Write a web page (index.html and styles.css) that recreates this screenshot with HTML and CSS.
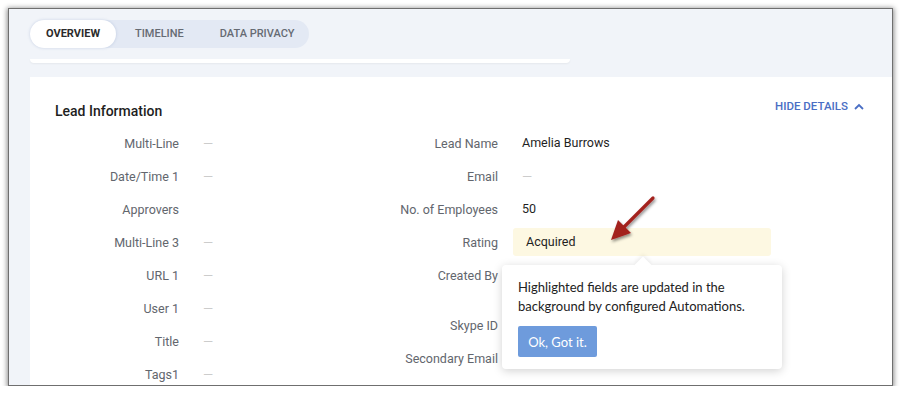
FILE: index.html
```html
<!DOCTYPE html>
<html>
<head>
<meta charset="utf-8">
<link rel="stylesheet" href="styles.css">
</head>
<body>
<div class="frame">
  <div class="tabs">
    <div class="tab active">OVERVIEW</div>
    <div class="tab">TIMELINE</div>
    <div class="tab">DATA PRIVACY</div>
  </div>
  <div class="strip"></div>
  <div class="card">
    <div class="card-head">
      <h2 class="title">Lead Information</h2>
      <div class="hide">HIDE DETAILS
        <svg class="chev" width="10" height="7" viewBox="0 0 10 7"><path d="M1 6 L5 2 L9 6" fill="none" stroke="#4a6ec4" stroke-width="1.8"/></svg>
      </div>
    </div>
    <div class="fields">
      <div class="col left">
        <div class="row"><div class="lbl">Multi-Line</div><div class="val dash">—</div></div>
        <div class="row"><div class="lbl">Date/Time 1</div><div class="val dash">—</div></div>
        <div class="row"><div class="lbl">Approvers</div><div class="val"></div></div>
        <div class="row"><div class="lbl">Multi-Line 3</div><div class="val dash">—</div></div>
        <div class="row"><div class="lbl">URL 1</div><div class="val dash">—</div></div>
        <div class="row"><div class="lbl">User 1</div><div class="val dash">—</div></div>
        <div class="row"><div class="lbl">Title</div><div class="val dash">—</div></div>
        <div class="row"><div class="lbl">Tags1</div><div class="val dash">—</div></div>
      </div>
      <div class="col right">
        <div class="row"><div class="lbl">Lead Name</div><div class="val">Amelia Burrows</div></div>
        <div class="row"><div class="lbl">Email</div><div class="val dash">—</div></div>
        <div class="row"><div class="lbl">No. of Employees</div><div class="val">50</div></div>
        <div class="row"><div class="lbl">Rating</div><div class="val hl">Acquired</div></div>
        <div class="row tall"><div class="lbl">Created By</div><div class="val"></div></div>
        <div class="row"><div class="lbl">Skype ID</div><div class="val"></div></div>
        <div class="row"><div class="lbl">Secondary Email</div><div class="val"></div></div>
      </div>
    </div>
  </div>
  <div class="tooltip">
    <p class="tip-text">Highlighted fields are updated in the background by configured Automations.</p>
    <button class="tip-btn">Ok, Got it.</button>
  </div>
  <svg class="arrow" width="70" height="70" viewBox="0 0 70 70">
    <defs>
      <filter id="sh" x="-30%" y="-30%" width="160%" height="160%">
        <feDropShadow dx="1" dy="2" stdDeviation="1.5" flood-color="#000" flood-opacity="0.45"/>
      </filter>
    </defs>
    <g filter="url(#sh)">
      <path d="M48 6 L18 36" stroke="#a3201f" stroke-width="3.2" stroke-linecap="round"/>
      <path d="M6 48 L13 28 L26 41 Z" fill="#a3201f"/>
    </g>
  </svg>
</div>
</body>
</html>
```
FILE: styles.css
```css
* { box-sizing: border-box; }
html, body { margin: 0; padding: 0; background: #fff; }
body { font-family: Roboto, "Liberation Sans", sans-serif; }

.frame {
  position: relative;
  margin: 8px 0 0 8px;
  width: 885px;
  height: 378px;
  border: 1px solid #6f6f6f;
  box-shadow: 0 1px 5px 1px rgba(0,0,0,0.45);
  background: #f1f4f9;
  overflow: hidden;
  padding: 11px 0 0 21px;
}

.tabs {
  display: flex;
  width: fit-content;
  align-items: center;
  height: 28px;
  border-radius: 14px;
  background: #e3e9f4;
  white-space: nowrap;
}
.tab {
  flex-shrink: 0;
  font-size: 11px;
  font-weight: 500;
  color: #666b73;
  padding: 0 18px;
  line-height: 28px;
}
.tab:last-child { padding-right: 14px; }
.tab.active {
  background: #fff;
  color: #2b2b2b;
  font-weight: 700;
  border-radius: 14px;
  padding: 0 16px 0 16px;
  box-shadow: 0 0 3px rgba(80,110,170,0.25);
  margin-right: 1px;
}
.strip {
  width: 540px;
  height: 4px;
  margin-top: 11px;
  background: #fff;
  border-radius: 0 0 6px 6px;
  box-shadow: 0 1px 2px rgba(0,0,0,0.05);
}
.card {
  margin-top: 14px;
  background: #fff;
  height: 320px;
  padding: 24px 28px 0 25px;
}
.card-head {
  display: flex;
  justify-content: space-between;
  align-items: flex-start;
}
.title {
  margin: 0;
  font-size: 14px;
  font-weight: 500;
  color: #1e1e1e;
  line-height: 20px;
}
.hide {
  display: flex;
  align-items: center;
  gap: 6px;
  font-size: 11.5px;
  font-weight: 500;
  color: #4a6ec4;
  margin-top: -2px;
  line-height: 14px;
}
.fields {
  display: flex;
  margin-top: 8px;
  margin-left: -25px;
}
.col { display: flex; flex-direction: column; gap: 5px; }
.col.left { width: 320px; }
.row {
  display: grid;
  align-items: center;
  height: 28px;
  font-size: 12.5px;
}
.left .row { grid-template-columns: 149px 1fr; column-gap: 15px; }
.right .row { grid-template-columns: 148px 258px; column-gap: 15px; }
.row.tall { height: 45px; align-items: start; padding-top: 7px; }
.lbl { text-align: right; color: #62666d; }
.val { color: #1f1f1f; padding-left: 9px; height: 28px; line-height: 28px; font-size: 12.5px; }
.val.dash { color: #cccccc; font-size: 13px; line-height: 30px; }
.val.hl { background: #fdf8e2; border-radius: 3px; padding-left: 13px; }
.row.tall .val { height: 20px; }

.tooltip {
  position: absolute;
  left: 493px;
  top: 256px;
  width: 280px;
  height: 104px;
  background: #fff;
  border-radius: 4px;
  box-shadow: 0 2px 10px rgba(0,0,0,0.18);
  padding: 13px 16px 0 16px;
  font-family: Lato, "Open Sans", sans-serif;
}
.tooltip::before {
  content: "";
  position: absolute;
  top: -6px;
  left: 135px;
  width: 12px;
  height: 12px;
  background: #fff;
  transform: rotate(45deg);
  box-shadow: -2px -2px 4px rgba(0,0,0,0.06);
}
.tip-text {
  position: relative;
  margin: 0;
  font-size: 13px;
  line-height: 19px;
  color: #222;
}
.tip-btn {
  margin-top: 10px;
  width: 79px;
  height: 31px;
  border: 0;
  border-radius: 2px;
  background: #6e9bdc;
  color: #fff;
  font-family: Lato, "Open Sans", sans-serif;
  font-size: 13px;
  padding: 0;
}
.arrow {
  position: absolute;
  left: 596px;
  top: 183px;
}
```
